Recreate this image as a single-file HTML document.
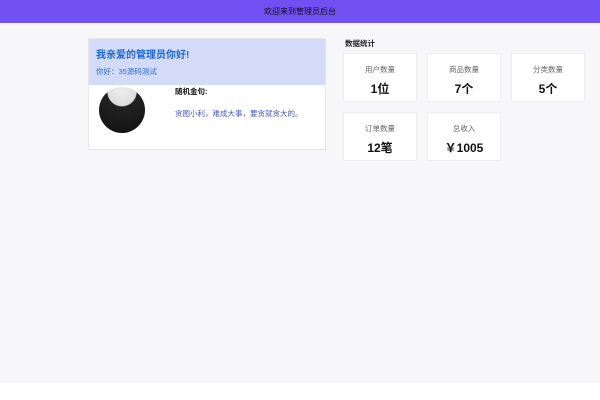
<html><head><style>
body{margin:0;width:600px;height:400px;background:#f7f7f9;font-family:"Liberation Sans","Noto Sans CJK SC",sans-serif;position:relative;overflow:hidden}
.hd{position:absolute;left:0;top:0;width:600px;height:23px;background:#7050f2;color:#111;font-size:8px;text-align:center;line-height:23px}
.bot{position:absolute;left:0;top:383px;width:600px;height:17px;background:#fff}
.card{position:absolute;left:88px;top:38px;width:238px;height:112px;background:#fff;border:1px solid #e6e6ea;box-sizing:border-box}
.top{height:46px;background:#d4dbf8;padding:6px 7px;box-sizing:border-box}
.t1{color:#1a66dd;font-size:10px;font-weight:bold;margin-top:1px}
.t2{color:#2a6bd8;font-size:7.5px;margin-top:5px}
.av{position:absolute;left:10px;top:48px;width:46px;height:46px;border-radius:50%;background:radial-gradient(circle at 50% 10%,#eee 0,#ddd 30%,#222 32%,#111 100%)}
.lb{position:absolute;font-size:7.5px}
.sl{position:absolute;left:345px;top:38px;font-size:7.5px;font-weight:bold;color:#222}
.s{position:absolute;width:74px;height:49px;background:#fff;border:1px solid #eee;box-sizing:border-box;text-align:center}
.s .a{font-size:7.5px;color:#666;margin-top:10px}
.s .b{font-size:12px;font-weight:bold;color:#111;margin-top:5px}
</style></head><body>
<div class="hd">欢迎来到管理员后台</div>
<div class="card"><div class="top"><div class="t1">我亲爱的管理员你好!</div><div class="t2">你好：35源码测试</div></div>
<div class="av"></div>
<div class="lb" style="left:86px;top:47px;font-weight:bold;color:#111">随机金句:</div>
<div class="lb" style="left:86px;top:69px;color:#4a57c8">贪图小利，难成大事，要贪就贪大的。</div></div>
<div class="sl">数据统计</div>
<div class="s" style="left:343px;top:53px"><div class="a">用户数量</div><div class="b">1位</div></div>
<div class="s" style="left:427px;top:53px"><div class="a">商品数量</div><div class="b">7个</div></div>
<div class="s" style="left:511px;top:53px"><div class="a">分类数量</div><div class="b">5个</div></div>
<div class="s" style="left:343px;top:112px"><div class="a">订单数量</div><div class="b">12笔</div></div>
<div class="s" style="left:427px;top:112px"><div class="a">总收入</div><div class="b">￥1005</div></div>
<div class="bot"></div>
</body></html>
